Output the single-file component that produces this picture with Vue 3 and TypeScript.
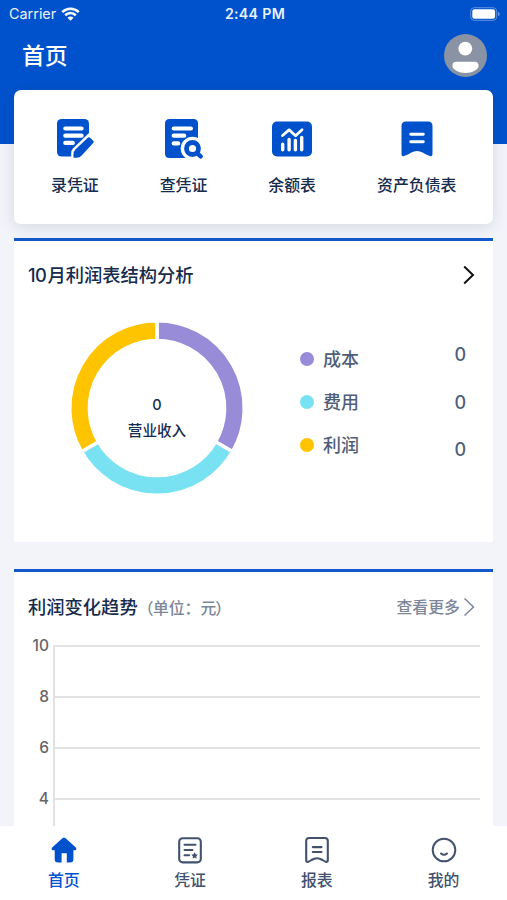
<script setup lang="ts">
interface Slice {
  name: string
  value: number
  color: string
}

const shortcuts = [
  { id: 'enter', label: '录凭证' },
  { id: 'search', label: '查凭证' },
  { id: 'balance', label: '余额表' },
  { id: 'sheet', label: '资产负债表' },
]

const slices: Slice[] = [
  { name: '成本', value: 0, color: '#988bd8' },
  { name: '费用', value: 0, color: '#79e2f2' },
  { name: '利润', value: 0, color: '#ffc400' },
]

const ticks = [10, 8, 6, 4]

const tabs = [
  { id: 'home', label: '首页' },
  { id: 'voucher', label: '凭证' },
  { id: 'report', label: '报表' },
  { id: 'mine', label: '我的' },
]

const OUTER = 87.3
const INNER = 67.6

function point(radius: number, angle: number): string {
  const rad = (angle * Math.PI) / 180
  return `${(radius * Math.sin(rad)).toFixed(2)} ${(-radius * Math.cos(rad)).toFixed(2)}`
}

// All values are zero, so the ring is divided evenly between the slices.
function slicePath(index: number): string {
  const step = 360 / slices.length
  const a = index * step
  const b = a + step
  return `M${point(OUTER, a)}A${OUTER} ${OUTER} 0 0 1 ${point(OUTER, b)}L${point(INNER, b)}A${INNER} ${INNER} 0 0 0 ${point(INNER, a)}Z`
}
</script>

<template>
  <div class="screen">
    <div class="status">
      <div class="carrier">
        <span>Carrier</span>
        <svg width="19" height="14" viewBox="0 0 18 14" fill="none" stroke="#fff" stroke-width="2.6">
          <path d="M.8 5.1C5.4.6 12.6.6 17.2 5.1" />
          <path d="M3.7 8.3c3.1-2.9 7.5-2.9 10.6 0" />
          <path d="M6 10.7c1.8-1.6 4.2-1.6 6 0l-3 3z" fill="#fff" stroke="none" />
        </svg>
      </div>
      <span class="time">2:44 PM</span>
      <svg class="battery" width="31" height="14" viewBox="0 0 31 14">
        <rect x=".7" y=".7" width="26" height="12.6" rx="3.6" fill="none" stroke="#5f92de" stroke-width="1" />
        <rect x="2.3" y="2.3" width="22.8" height="9.4" rx="2.2" fill="#fff" />
        <path d="M28.2 4.8c2 .8 2 3.6 0 4.4z" fill="#7fa8e5" />
      </svg>
    </div>

    <header class="header">
      <h1>首页</h1>
      <svg width="43" height="43" viewBox="0 0 43 43">
        <circle cx="21.5" cy="21.5" r="21.5" fill="#8993a4" />
        <circle cx="21.3" cy="14.6" r="6.9" fill="#fff" />
        <path d="M12.4 27.8h18.2q4 0 4 4c0 4-6.5 7.2-13.1 7.2S8.4 35.8 8.4 31.8q0-4 4-4z" fill="#fff" />
      </svg>
    </header>

    <nav class="shortcuts">
      <div v-for="item in shortcuts" :key="item.id" class="shortcut">
        <svg v-if="item.id === 'enter'" width="40" height="42" viewBox="0 0 40 42">
          <rect x="2" y="1" width="32" height="37.5" rx="4.5" fill="#0052cc" />
          <path d="M10.3 10.5h16.3M10.3 17.7h16.3M10.3 24.9h7.5" stroke="#fff" stroke-width="4.2" stroke-linecap="round" />
          <path d="M16.2 39v-3.5q0-3.2 2-5.2l15.5-15 7.1 5.3v18.4z" fill="#fff" />
          <path d="M18.5 39.7v-3.4q.1-3.1 1.9-4.9L32.8 19.8q1.2-1 2.4 0l3 2.900q1.1 1.2 0 2.400L26.200 38q-1.800 1.700-4.300 1.700z" fill="#0052cc" />
        </svg>
        <svg v-else-if="item.id === 'search'" width="40" height="42" viewBox="0 0 40 42">
          <path d="M5.5 1h24q4.5 0 4.5 4.5V21L22 40H5.5Q1 40 1 35.5v-30Q1 1 5.5 1z" fill="#0052cc" />
          <path d="M9.7 10.5h17.2M9.7 17.7h10.5M9.7 25.4h4.5" stroke="#fff" stroke-width="4.2" stroke-linecap="round" />
          <circle cx="28.5" cy="30.5" r="11.8" fill="#fff" />
          <circle cx="28.5" cy="30.5" r="6" fill="none" stroke="#0052cc" stroke-width="4.8" />
          <path d="M33 35.2l3.7 3.2" stroke="#0052cc" stroke-width="4.4" stroke-linecap="round" />
        </svg>
        <svg v-else-if="item.id === 'balance'" width="40" height="42" viewBox="0 0 40 42">
          <rect x="0" y="3.6" width="40" height="34.8" rx="5" fill="#0052cc" />
          <path d="M10.5 17.5l6.6-5.6 6.5 5.8L30 11.8" fill="none" stroke="#fff" stroke-width="2.8" stroke-linecap="round" stroke-linejoin="round" />
          <path d="M10.7 26.2v5.5M17.1 21.5v10.2M23.4 22.5v9.2M29.7 19.5v12.2" stroke="#fff" stroke-width="3.4" stroke-linecap="round" />
        </svg>
        <svg v-else width="40" height="42" viewBox="0 0 40 42">
          <path d="M9 3.6h22q4.5 0 4.5 4.5v28q0 2.8-2.6 2l-4.3-1.8q-1.3-.6-2.5-1.5-6.1-3.8-12.2 0-1.2.9-2.5 1.5l-4.3 1.8q-2.6.8-2.6-2v-28Q4.5 3.6 9 3.6z" fill="#0052cc" />
          <path d="M13.7 16.3h12.6M13.7 23.8h12.6" stroke="#fff" stroke-width="2.9" stroke-linecap="round" />
        </svg>
        <span>{{ item.label }}</span>
      </div>
    </nav>

    <section class="panel structure">
      <div class="panel-head">
        <h2><span class="latin">10</span>月利润表结构分析</h2>
        <svg width="12" height="20" viewBox="0 0 12 20" fill="none" stroke="#111" stroke-width="2">
          <path d="M1.2 1.5l8.8 8.5-8.8 8.5" />
        </svg>
      </div>
      <div class="structure-body">
        <div class="ring">
          <svg class="ring-chart" width="180" height="180" viewBox="-90 -90 180 180">
            <path v-for="(slice, i) in slices" :key="slice.name" :d="slicePath(i)" :fill="slice.color" stroke="#fff" stroke-width="3.5" />
          </svg>
          <div class="ring-text">
            <span class="ring-value">0</span>
            <span class="ring-name">营业收入</span>
          </div>
        </div>
        <ul class="legend">
          <li v-for="slice in slices" :key="slice.name">
            <i class="dot" :style="{ background: slice.color }"></i>
            <span>{{ slice.name }}</span>
          </li>
        </ul>
        <div class="values">
          <span v-for="slice in slices" :key="slice.name">{{ slice.value }}</span>
        </div>
      </div>
    </section>

    <section class="panel trend">
      <div class="panel-head">
        <h2>利润变化趋势<small><span class="open">（</span>单位：元<span class="close">）</span></small></h2>
        <div class="more">
          <span>查看更多</span>
          <svg width="12" height="20" viewBox="0 0 12 20" fill="none" stroke="#7c8699" stroke-width="1.5">
            <path d="M1.5 1.5l9 8.5-9 8.5" />
          </svg>
        </div>
      </div>
      <div class="chart">
        <div v-for="tick in ticks" :key="tick" class="chart-row">
          <span class="tick">{{ tick }}</span>
          <div class="cell"></div>
        </div>
      </div>
    </section>

    <nav class="tabs">
      <div v-for="tab in tabs" :key="tab.id" class="tab" :class="{ active: tab.id === 'home' }">
        <svg v-if="tab.id === 'home'" width="28" height="28" viewBox="0 0 28 28">
          <path d="M12.7 2.1q1.3-1.1 2.6 0l10.3 9.2c1.4 1.2.8 3-.9 3h-1.3v8.900q0 3.300-3.300 3.300h-3.300v-9.300h-5.200v9.300H8q-3.300 0-3.300-3.300v-8.900H3.300c-1.700 0-2.300-1.800-.9-3z" fill="#0052cc" />
        </svg>
        <svg v-else-if="tab.id === 'voucher'" width="28" height="28" viewBox="0 0 28 28" fill="none" stroke="#42526e" stroke-linecap="round">
          <rect x="3.2" y="2.2" width="21.6" height="24.2" rx="3.5" stroke-width="2.1" />
          <path d="M8.5 8.8h11M8.5 13.9h8M8.5 19.2h4.7" stroke-width="2" />
          <path d="M18.6 16.3l1.1 1.9 2.1.5-1.5 1.6.3 2.2-2-.9-2 .9.3-2.2-1.5-1.6 2.1-.5z" fill="#42526e" stroke="none" />
        </svg>
        <svg v-else-if="tab.id === 'report'" width="28" height="28" viewBox="0 0 28 28" fill="none" stroke="#42526e" stroke-width="2.1" stroke-linecap="round" stroke-linejoin="round">
          <path d="M6.2 2h15.6q3 0 3 3v19.2q0 2.2-2 1.5-1.8-.6-3.3-1.7-5.5-3.5-11 0-1.5 1.1-3.3 1.7-2 .7-2-1.5V5q0-3 3-3z" />
          <path d="M9.8 11.1h8.700M9.800 16h8.700" />
        </svg>
        <svg v-else width="28" height="28" viewBox="0 0 28 28" fill="none" stroke="#42526e" stroke-width="2" stroke-linecap="round">
          <circle cx="14" cy="14" r="11.3" />
          <path d="M11 17.5q3 2.6 6 0" />
        </svg>
        <span>{{ tab.label }}</span>
      </div>
    </nav>
  </div>
</template>

<style>
body {
  margin: 0;
  overflow: hidden;
}
</style>

<style scoped>
.screen {
  display: flex;
  flex-direction: column;
  height: 900px;
  overflow: hidden;
  color: #172b4d;
  font-family: Inter, "Noto Sans CJK SC", sans-serif;
  font-weight: 500;
  background: linear-gradient(#0052cc 144px, #f3f4fa 144px);
}

.status {
  display: grid;
  grid-template-columns: 1fr auto 1fr;
  flex: none;
  align-items: center;
  height: 28px;
  padding: 0 6px 0 9px;
  color: #e9f1ff;
  font-size: 14.4px;
  line-height: 18px;
}

.carrier {
  display: flex;
  align-items: center;
  gap: 5px;
  font-weight: 400;
}

.time {
  font-size: 14.2px;
  font-weight: 600;
  letter-spacing: 0.3px;
}

.battery {
  justify-self: end;
}

.header {
  display: flex;
  flex: none;
  align-items: center;
  justify-content: space-between;
  height: 54px;
  padding: 0 20.5px 0 22px;
}

.header h1 {
  margin: 2px 0 0;
  color: #fff;
  font-size: 22.8px;
  font-weight: 500;
  line-height: 30px;
}

.shortcuts {
  display: flex;
  flex: none;
  justify-content: space-between;
  box-sizing: border-box;
  height: 134px;
  margin: 8px 14px 0;
  padding: 28px 36.5px 0 37px;
  background: #fff;
  border-radius: 7px;
  box-shadow: 0 3px 16px rgba(23, 43, 77, 0.13);
}

.shortcut {
  display: flex;
  flex-direction: column;
  align-items: center;
  gap: 13px;
  font-size: 15.9px;
  line-height: 25px;
}

.panel {
  box-sizing: border-box;
  flex: none;
  margin: 0 14px;
  background: #fff;
  border-top: 3px solid #1258c8;
}

.panel-head {
  display: flex;
  align-items: center;
  justify-content: space-between;
}

.panel h2 {
  margin: 0;
  font-size: 18.3px;
  font-weight: 500;
  line-height: 28px;
}

.latin {
  margin-right: 1px;
  letter-spacing: -0.5px;
}

.structure {
  height: 304px;
  margin-top: 14px;
  padding: 20px 18px 0 14px;
}

.structure-body {
  display: grid;
  grid-template-columns: 258px 1fr auto;
  padding: 29px 9px 0 14px;
}

.ring {
  display: grid;
  width: 180px;
  height: 180px;
  margin-left: 25px;
}

.ring-chart,
.ring-text {
  grid-area: 1 / 1;
}

.ring-text {
  display: flex;
  flex-direction: column;
  align-items: center;
  padding-top: 76px;
}

.ring-value {
  font-size: 14.5px;
  line-height: 22px;
}

.ring-name {
  margin-top: 4px;
  font-size: 14.6px;
  line-height: 22px;
}

.legend {
  display: flex;
  flex-direction: column;
  gap: 15px;
  margin: 27px 0 0;
  padding: 0;
  color: #505f79;
  font-size: 18px;
  line-height: 28px;
  list-style: none;
}

.legend li {
  display: flex;
  align-items: center;
  gap: 9px;
}

.legend span {
  padding-top: 1px;
  line-height: 27px;
}

.dot {
  width: 14px;
  height: 14px;
  border-radius: 50%;
}

.values {
  display: flex;
  flex-direction: column;
  gap: 19.5px;
  padding-top: 23px;
  color: #505f79;
  font-size: 18px;
  line-height: 28px;
}

.trend {
  flex: 1 1 0;
  min-height: 0;
  margin-top: 27px;
  padding: 21px 13px 0 14px;
  overflow: hidden;
}

.trend small {
  color: #7c8699;
  font-size: 15.8px;
  font-weight: 500;
}

.open {
  margin-right: -0.5px;
}

.close {
  margin-left: -1px;
}

.more {
  display: flex;
  align-items: center;
  gap: 3px;
  height: 24px;
  margin-top: -3px;
  padding-right: 5px;
  color: #7c8699;
  font-size: 15.9px;
  font-weight: 500;
}

.chart {
  padding-top: 22px;
}

.chart-row {
  display: flex;
  height: 51px;
}

.tick {
  width: 21px;
  margin: -10px 4px 0 0;
  color: #666;
  font-size: 15.5px;
  font-weight: 500;
  line-height: 22px;
  text-align: right;
}

.cell {
  box-sizing: border-box;
  flex: 1;
  border-top: 2px solid #e2e2e2;
  border-left: 2px solid #e2e2e2;
}

.tabs {
  display: grid;
  flex: none;
  grid-template-columns: repeat(4, 1fr);
  height: 74px;
  background: #fff;
}

.tab {
  display: flex;
  flex-direction: column;
  align-items: center;
  gap: 5px;
  padding-top: 10px;
  color: #42526e;
  font-size: 15.9px;
  line-height: 24px;
}

.tab.active {
  padding-left: 1px;
  color: #0052cc;
}
</style>
